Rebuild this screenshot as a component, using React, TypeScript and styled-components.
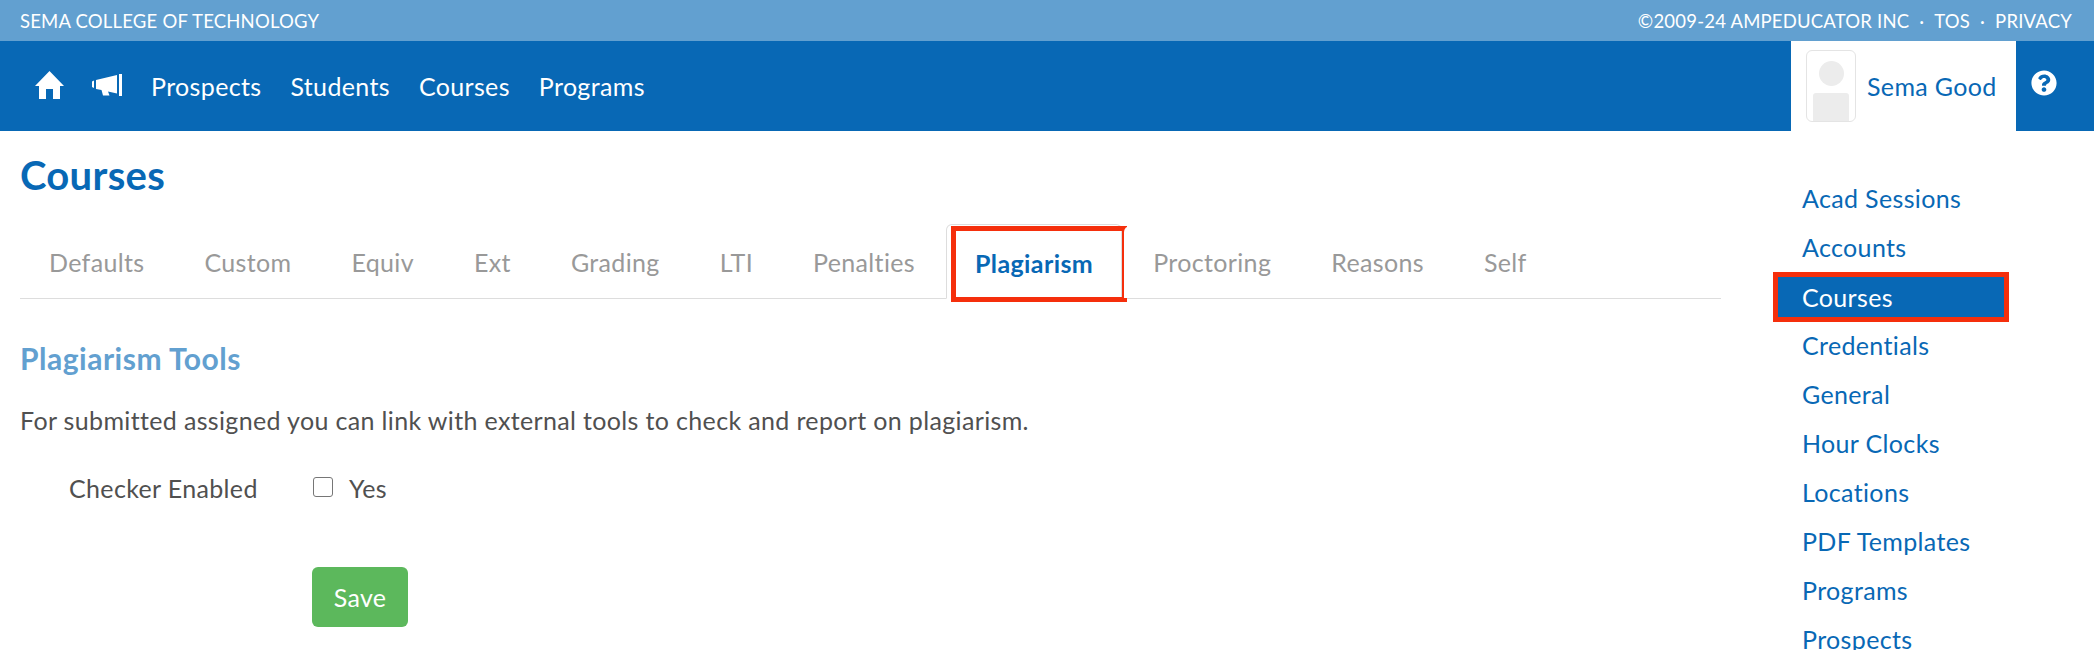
import React from "react";
import styled, { createGlobalStyle } from "styled-components";
import { FaQuestionCircle } from "react-icons/fa";

const blue = "#0868b5";
const red = "#f52f0c";

const GlobalStyle = createGlobalStyle`
    html, body {
        margin: 0;
        height: 650px;
        overflow: hidden;
        background: white;
    }
    body {
        font-family: "Lato", "Noto Sans", sans-serif;
        color: #505050;
        letter-spacing: 0.35px;
    }
`;

const TopBar = styled.div`
    height: 41px;
    background: #62a0d0;
    color: white;
    font-size: 18.5px;
    letter-spacing: 0.2px;
    display: flex;
    align-items: center;
    justify-content: space-between;
    padding: 0 22px 0 20px;
`;

const TopLinks = styled.div`
    display: flex;
    gap: 10px;
`;

const NavBar = styled.div`
    height: 90px;
    background: ${blue};
    display: flex;
    align-items: center;
    justify-content: space-between;
`;

const NavLinks = styled.div`
    display: flex;
    align-items: center;
    padding-left: 35px;
    color: white;
    font-size: 25px;
`;

const NavIcon = styled.span`
    display: flex;
    margin-right: 28px;
    margin-top: -2px;
`;

const NavLink = styled.a`
    margin-right: 29px;
`;

const NavRight = styled.div`
    display: flex;
    height: 100%;
`;

const UserBox = styled.div`
    width: 225px;
    box-sizing: border-box;
    background: white;
    display: flex;
    align-items: center;
    padding-left: 15px;
    gap: 11px;
    color: ${blue};
    font-size: 25px;
`;

const Avatar = styled.div`
    width: 50px;
    height: 72px;
    box-sizing: border-box;
    border: 1px solid #e4e4e4;
    border-radius: 6px;
    display: flex;
    flex-direction: column;
    align-items: center;
    gap: 7px;
    padding-top: 10px;
    overflow: hidden;
`;

const AvatarHead = styled.div`
    width: 25px;
    height: 25px;
    border-radius: 50%;
    background: #ececec;
`;

const AvatarBody = styled.div`
    width: 36px;
    flex: 1;
    background: #ececec;
    border-radius: 3px 3px 0 0;
`;

const HelpBox = styled.div`
    width: 78px;
    display: flex;
    justify-content: center;
    padding-top: 29px;
    padding-right: 22px;
    box-sizing: border-box;
    color: white;
`;

const Body = styled.div`
    display: flex;
`;

const Main = styled.div`
    width: 1721px;
    padding-left: 20px;
    box-sizing: border-box;
`;

const Title = styled.h1`
    margin: 0;
    padding-top: 20px;
    height: 95px;
    box-sizing: border-box;
    font-size: 40px;
    line-height: 48px;
    font-weight: 700;
    letter-spacing: 0.3px;
    color: ${blue};
`;

const Tabs = styled.div`
    display: flex;
    height: 73px;
    box-sizing: border-box;
    border-bottom: 1px solid #dddddd;
`;

const Tab = styled.a<{ $active?: boolean }>`
    position: relative;
    box-sizing: border-box;
    height: ${(p) => (p.$active ? "75px" : "72px")};
    margin: ${(p) => (p.$active ? "-2px 2px 0 0" : "0 2px 0 0")};
    padding: ${(p) => (p.$active ? "3px 28px 0" : "0 28px")};
    border: 1px solid ${(p) => (p.$active ? "#dddddd" : "transparent")};
    border-bottom-color: ${(p) => (p.$active ? "white" : "transparent")};
    border-radius: 6px 6px 0 0;
    display: flex;
    align-items: center;
    font-size: 25px;
    font-weight: ${(p) => (p.$active ? 700 : 400)};
    letter-spacing: ${(p) => (p.$active ? "0.4px" : "0.35px")};
    color: ${(p) => (p.$active ? blue : "#999999")};
    background: white;
`;

const TabMark = styled.span`
    position: absolute;
    top: 1px;
    left: 4px;
    width: 176px;
    height: 76px;
    box-sizing: border-box;
    border: 5px solid ${red};
`;

const SubHeading = styled.h3`
    margin: 41px 0 0;
    font-size: 30px;
    line-height: 36px;
    font-weight: 700;
    letter-spacing: 0.5px;
    color: #62a0d0;
`;

const Lead = styled.p`
    margin: 27px 0 0;
    font-size: 25px;
    line-height: 34px;
`;

const FormRow = styled.div`
    display: flex;
    align-items: center;
    margin-top: 34px;
    height: 34px;
    font-size: 25px;
`;

const FieldLabel = styled.label`
    width: 293px;
    padding-left: 49px;
    box-sizing: border-box;
`;

const CheckBox = styled.span`
    width: 20px;
    height: 20px;
    box-sizing: border-box;
    border: 1.5px solid #767676;
    border-radius: 3px;
    margin-right: 16px;
    margin-top: -3px;
`;

const SaveButton = styled.button`
    display: block;
    margin: 62px 0 0 292px;
    width: 96px;
    height: 60px;
    border: none;
    border-radius: 6px;
    background: #5cb85c;
    color: white;
    font-family: inherit;
    font-size: 25px;
    letter-spacing: 0.35px;
`;

const SideNav = styled.div`
    flex: 1;
    padding: 43px 0 0 52px;
`;

const SideLink = styled.a<{ $active?: boolean }>`
    display: block;
    box-sizing: border-box;
    width: 236px;
    height: ${(p) => (p.$active ? "50px" : "49px")};
    line-height: ${(p) => (p.$active ? "40px" : "49px")};
    padding-left: ${(p) => (p.$active ? "24px" : "29px")};
    margin-bottom: ${(p) => (p.$active ? "-1px" : "0")};
    font-size: 25px;
    color: ${(p) => (p.$active ? "white" : blue)};
    background: ${(p) => (p.$active ? blue : "transparent")};
    border: ${(p) => (p.$active ? `5px solid ${red}` : "none")};
`;

const tabs = ["Defaults", "Custom", "Equiv", "Ext", "Grading", "LTI", "Penalties", "Plagiarism", "Proctoring", "Reasons", "Self"];
const sideLinks = ["Acad Sessions", "Accounts", "Courses", "Credentials", "General", "Hour Clocks", "Locations", "PDF Templates", "Programs", "Prospects"];

function HomeIcon() {
    return (
        <svg width="29" height="28" viewBox="0 0 29 28" fill="white">
            <path d="M14.5 0 L29 15 L25 15 L25 28 L18 28 L18 18 L11 18 L11 28 L4 28 L4 15 L0 15 Z" />
        </svg>
    );
}

function Megaphone() {
    return (
        <svg width="31" height="22" viewBox="0 0 31 22" fill="white">
            <path d="M0 7.5 L2 6.5 V14 L0 13 Z" />
            <path d="M4 6 L25 1 V19.5 L16 17.5 L17.5 21.5 H11 L9.5 16 L4 15 Z" />
            <path d="M27 0 h3 v22 h-3 z" />
        </svg>
    );
}

export default function App() {
    return (
        <>
            <GlobalStyle />
            <TopBar>
                <span>SEMA COLLEGE OF TECHNOLOGY</span>
                <TopLinks>
                    <span>©2009-24 AMPEDUCATOR INC</span>
                    <span>·</span>
                    <span>TOS</span>
                    <span>·</span>
                    <span>PRIVACY</span>
                </TopLinks>
            </TopBar>
            <NavBar>
                <NavLinks>
                    <NavIcon><HomeIcon /></NavIcon>
                    <NavIcon><Megaphone /></NavIcon>
                    <NavLink>Prospects</NavLink>
                    <NavLink>Students</NavLink>
                    <NavLink>Courses</NavLink>
                    <NavLink>Programs</NavLink>
                </NavLinks>
                <NavRight>
                    <UserBox>
                        <Avatar>
                            <AvatarHead />
                            <AvatarBody />
                        </Avatar>
                        Sema Good
                    </UserBox>
                    <HelpBox><FaQuestionCircle size={26} /></HelpBox>
                </NavRight>
            </NavBar>
            <Body>
                <Main>
                    <Title>Courses</Title>
                    <Tabs>
                        {tabs.map((t) => (
                            <Tab key={t} $active={t === "Plagiarism"}>
                                {t}
                                {t === "Plagiarism" && <TabMark />}
                            </Tab>
                        ))}
                    </Tabs>
                    <SubHeading>Plagiarism Tools</SubHeading>
                    <Lead>For submitted assigned you can link with external tools to check and report on plagiarism.</Lead>
                    <FormRow>
                        <FieldLabel>Checker Enabled</FieldLabel>
                        <CheckBox />
                        Yes
                    </FormRow>
                    <SaveButton>Save</SaveButton>
                </Main>
                <SideNav>
                    {sideLinks.map((s) => (
                        <SideLink key={s} $active={s === "Courses"}>{s}</SideLink>
                    ))}
                </SideNav>
            </Body>
        </>
    );
}
